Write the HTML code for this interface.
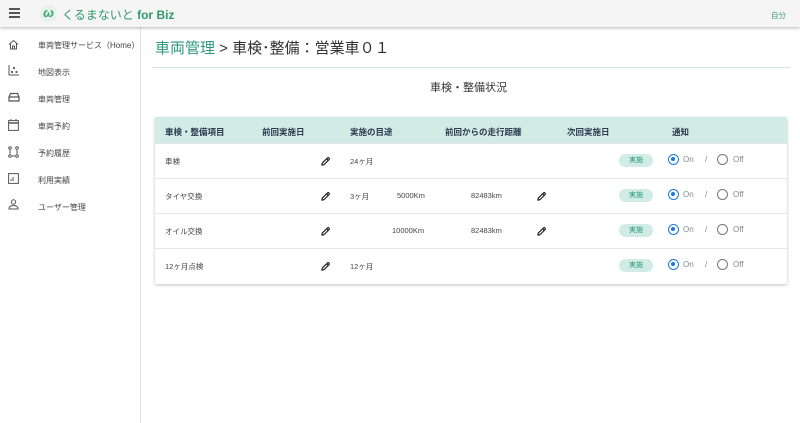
<!DOCTYPE html>
<html><head><meta charset="utf-8"><style>
*{margin:0;padding:0;box-sizing:border-box}
body{width:800px;height:423px;background:#fff;font-family:"Liberation Sans","Noto Sans CJK JP",sans-serif;color:#333;position:relative;overflow:hidden}
.hdr{position:absolute;left:0;top:0;width:800px;height:27px;background:#f5f5f5;box-shadow:0 1px 3px rgba(0,0,0,.3);z-index:2}
.side{position:absolute;left:0;top:27px;width:141px;height:396px;border-right:1px solid #e0e0e0}
.nav{position:absolute;left:38px;font-size:8px;color:#444}
.ic{position:absolute;left:8px}
.abs{position:absolute;white-space:nowrap}
.tbl{position:absolute;left:155px;top:117px;width:632px;height:167px;box-shadow:0 1px 3px rgba(0,0,0,.25);border-radius:2px}
.th{position:absolute;left:0;top:0;width:632px;height:26px;background:#d1ece4}
.thx{position:absolute;top:9px;font-size:8.5px;font-weight:bold;color:#2a3a50}
.row{position:absolute;left:0;width:632px;border-top:1px solid #e6e6e6;height:35px}
.c{position:absolute;font-size:7.5px;color:#444;top:12px}
.p{position:absolute;top:12px}
.chip{position:absolute;left:464px;top:10px;width:34px;height:13px;border-radius:7px;background:#d1ece4;color:#2a9a72;font-size:7px;text-align:center;line-height:13px}
.r{position:absolute;top:10px;width:11px;height:11px;border-radius:50%}
.on{left:513px;border:1.5px solid #1e78d8}
.on::after{content:"";position:absolute;left:2px;top:2px;width:4px;height:4px;border-radius:50%;background:#1e78d8}
.off{left:562px;border:1.2px solid #777}
.t{position:absolute;top:11px;font-size:8px;color:#888}
</style></head><body>
<svg width="0" height="0" style="position:absolute"><symbol id="pen" viewBox="0 0 12 12"><path d="M2 10 L2.6 7.6 L8 2.2 Q9 1.4 9.8 2.2 Q10.6 3 9.8 4 L4.4 9.4 Z M7.2 3 L9 4.8" fill="none" stroke="#222" stroke-width="1.3" stroke-linejoin="round"/></symbol></svg>
<div class="hdr">
<div class="abs" style="left:9px;top:8px;width:11px;height:1.5px;background:#555;box-shadow:0 4px 0 #555,0 8px 0 #555"></div>
<div class="abs" style="left:40px;top:5px;width:17px;height:17px;border-radius:50%;background:#e6f2ea;color:#3aa86a;font-size:13px;font-style:italic;text-align:center;line-height:16px;font-weight:bold">ω</div>
<div class="abs" style="left:62px;top:6px;font-size:12px;color:#2f9a6a">くるまないと <b>for Biz</b></div>
<div class="abs" style="left:771px;top:10px;font-size:7.5px;color:#2f9a6a">自分</div>
</div>
<div class="side">
<svg class="ic" style="top:12px" width="11" height="11" viewBox="0 0 11 11"><path d="M1 5.5 L5.5 1.5 L10 5.5 M2.5 4.5 V10 H8.5 V4.5 M4.5 10 V7 H6.5 V10" fill="none" stroke="#555" stroke-width="1"/></svg><div class="nav" style="top:13px">車両管理サービス（Home）</div>
<svg class="ic" style="top:38px" width="11" height="11" viewBox="0 0 11 11"><path d="M1 0 V10 H11" fill="none" stroke="#555"/><circle cx="4" cy="7" r="1.1" fill="#555"/><circle cx="6" cy="3" r="1.1" fill="#555"/><circle cx="8.5" cy="7" r="1.1" fill="#555"/></svg><div class="nav" style="top:40px">地図表示</div>
<svg class="ic" style="top:65px" width="12" height="10" viewBox="0 0 12 10"><path d="M1 5 L2.5 1.5 H9.5 L11 5 V9 H1 Z M1 5 H11" fill="none" stroke="#555" stroke-width="1.2"/></svg><div class="nav" style="top:67px">車両管理</div>
<svg class="ic" style="top:92px" width="11" height="12" viewBox="0 0 11 12"><rect x="0.6" y="1.6" width="9.8" height="9.8" fill="none" stroke="#555"/><path d="M0.6 4 H10.4" stroke="#555" stroke-width="1.5"/><path d="M3 0 V2 M8 0 V2" stroke="#555"/></svg><div class="nav" style="top:94px">車両予約</div>
<svg class="ic" style="top:119px" width="11" height="12" viewBox="0 0 11 12"><circle cx="2" cy="2" r="1.3" fill="none" stroke="#555"/><circle cx="9" cy="2" r="1.3" fill="none" stroke="#555"/><circle cx="2" cy="10" r="1.3" fill="none" stroke="#555"/><circle cx="9" cy="10" r="1.3" fill="none" stroke="#555"/><path d="M2 4 V8 M9 4 V8 M4 10 H7" stroke="#555"/></svg><div class="nav" style="top:121px">予約履歴</div>
<svg class="ic" style="top:146px" width="11" height="11" viewBox="0 0 11 11"><rect x="0.6" y="0.6" width="9.8" height="9.8" fill="none" stroke="#555"/><path d="M3 8 V6 M5 8 V4" stroke="#555"/></svg><div class="nav" style="top:148px">利用実績</div>
<svg class="ic" style="top:172px" width="11" height="11" viewBox="0 0 11 11"><circle cx="5.5" cy="3" r="2.2" fill="none" stroke="#555"/><path d="M1 10 Q1 6.5 5.5 6.5 Q10 6.5 10 10 Z" fill="none" stroke="#555"/></svg><div class="nav" style="top:175px">ユーザー管理</div>
</div>
<div class="abs" style="left:155px;top:37px;font-size:15px;color:#333"><span style="color:#2f9a7a">車両管理</span> &gt; 車検･整備：営業車０１</div>
<div class="abs" style="left:152px;top:67px;width:638px;height:1px;background:#cfe9e2"></div>
<div class="abs" style="left:430px;top:79px;font-size:11px;color:#333">車検・整備状況</div>
<div class="tbl">
<div class="th">
<div class="thx" style="left:10px">車検・整備項目</div>
<div class="thx" style="left:107px">前回実施日</div>
<div class="thx" style="left:195px">実施の目途</div>
<div class="thx" style="left:290px">前回からの走行距離</div>
<div class="thx" style="left:412px">次回実施日</div>
<div class="thx" style="left:517px">通知</div>
</div>
<div class="row" style="top:26px"><div class="c" style="left:10px">車検</div><svg class="p" style="left:165px" width="11" height="11"><use href="#pen"/></svg><div class="c" style="left:195px">24ヶ月</div><div class="chip">実施</div><div class="r on"></div><div class="t" style="left:528px">On</div><div class="t" style="left:550px">/</div><div class="r off"></div><div class="t" style="left:578px">Off</div></div>
<div class="row" style="top:61px"><div class="c" style="left:10px">タイヤ交換</div><svg class="p" style="left:165px" width="11" height="11"><use href="#pen"/></svg><div class="c" style="left:195px">3ヶ月</div><div class="c" style="left:242px">5000Km</div><div class="c" style="left:316px">82483km</div><svg class="p" style="left:381px" width="11" height="11"><use href="#pen"/></svg><div class="chip">実施</div><div class="r on"></div><div class="t" style="left:528px">On</div><div class="t" style="left:550px">/</div><div class="r off"></div><div class="t" style="left:578px">Off</div></div>
<div class="row" style="top:96px"><div class="c" style="left:10px">オイル交換</div><svg class="p" style="left:165px" width="11" height="11"><use href="#pen"/></svg><div class="c" style="left:237px">10000Km</div><div class="c" style="left:316px">82483km</div><svg class="p" style="left:381px" width="11" height="11"><use href="#pen"/></svg><div class="chip">実施</div><div class="r on"></div><div class="t" style="left:528px">On</div><div class="t" style="left:550px">/</div><div class="r off"></div><div class="t" style="left:578px">Off</div></div>
<div class="row" style="top:131px;height:36px"><div class="c" style="left:10px">12ヶ月点検</div><svg class="p" style="left:165px" width="11" height="11"><use href="#pen"/></svg><div class="c" style="left:195px">12ヶ月</div><div class="chip">実施</div><div class="r on"></div><div class="t" style="left:528px">On</div><div class="t" style="left:550px">/</div><div class="r off"></div><div class="t" style="left:578px">Off</div></div>
</div>
</body></html>
